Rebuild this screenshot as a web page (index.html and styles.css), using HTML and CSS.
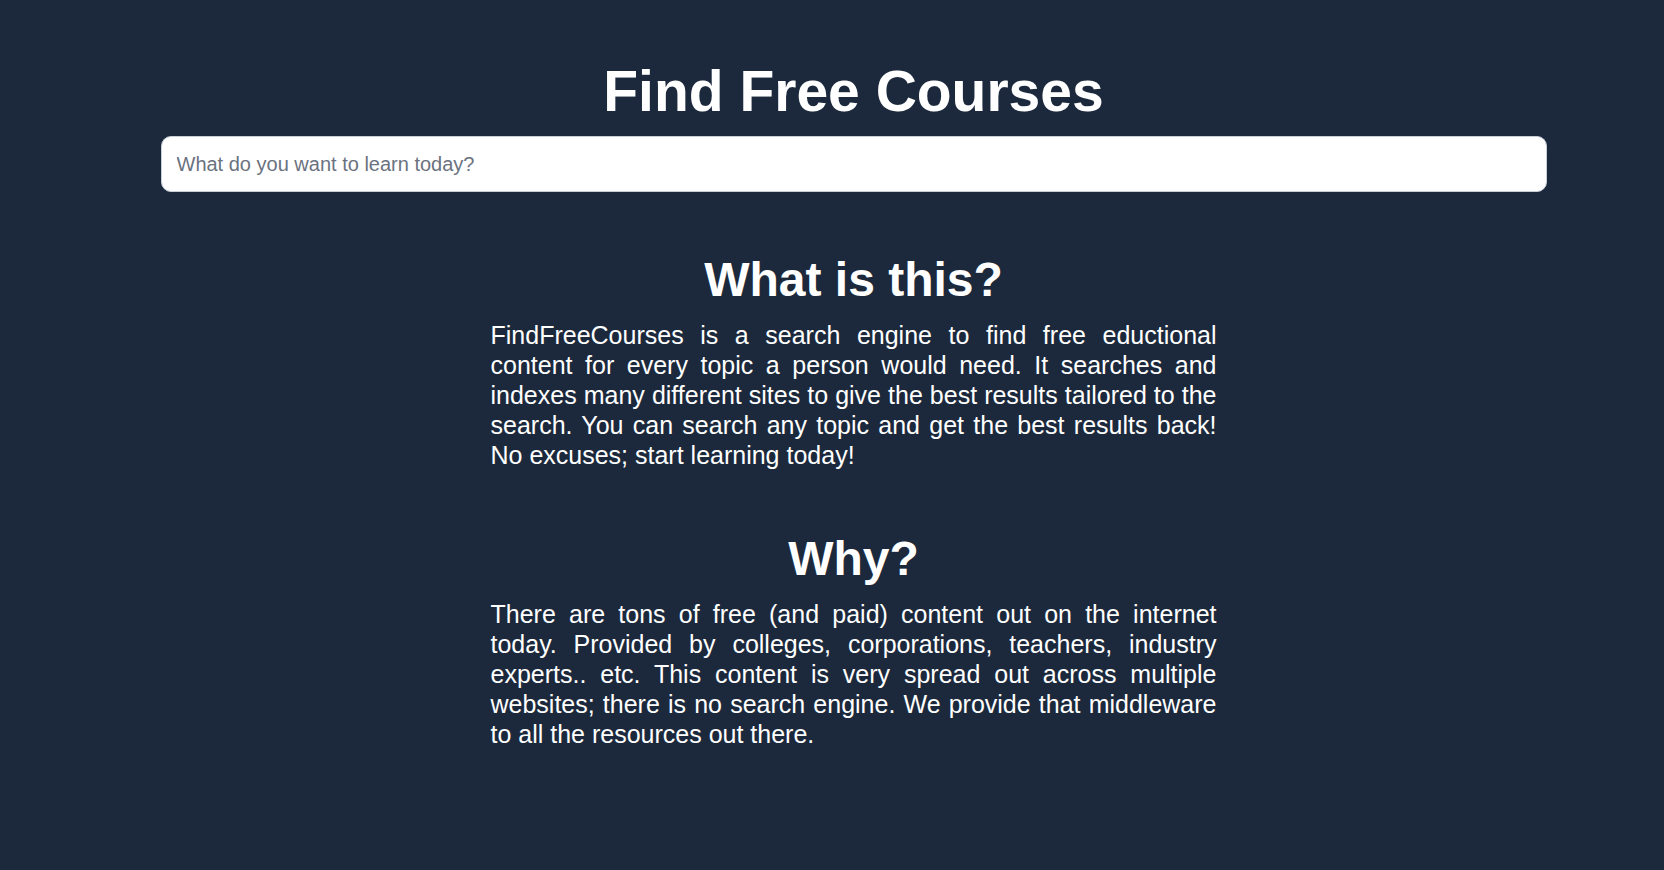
FILE: index.html
```html
<!DOCTYPE html>
<html lang="en">
<head>
<meta charset="utf-8">
<title>Find Free Courses</title>
<link rel="stylesheet" href="styles.css">
</head>
<body>
<main class="page">
  <h1 class="title">Find Free Courses</h1>
  <input class="search" type="text" placeholder="What do you want to learn today?">
  <section class="info first">
    <h2 class="info-title">What is this?</h2>
    <p class="info-text">FindFreeCourses is a search engine to find free eductional content for every topic a person would need. It searches and indexes many different sites to give the best results tailored to the search. You can search any topic and get the best results back! No excuses; start learning today!</p>
  </section>
  <section class="info">
    <h2 class="info-title">Why?</h2>
    <p class="info-text">There are tons of free (and paid) content out on the internet today. Provided by colleges, corporations, teachers, industry experts.. etc. This content is very spread out across multiple websites; there is no search engine. We provide that middleware to all the resources out there.</p>
  </section>
</main>
</body>
</html>
```
FILE: styles.css
```css
html, body {
  margin: 0;
  padding: 0;
  background: #1c293c;
  min-height: 100%;
}

body {
  font-family: "Liberation Sans", Arial, sans-serif;
  color: #ffffff;
}

.page {
  display: flex;
  flex-direction: column;
  align-items: center;
  padding: 58px 0 40px 43px;
}

.title {
  margin: 0;
  font-size: 57px;
  font-weight: 700;
  line-height: normal;
  text-align: center;
}

.search {
  box-sizing: border-box;
  margin-top: 12px;
  width: 1386px;
  height: 56px;
  padding: 0 15px;
  border: 1px solid #c8cfd9;
  border-radius: 10px;
  background: #ffffff;
  font-family: "Liberation Sans", Arial, sans-serif;
  font-size: 20px;
  color: #1f2937;
  outline: none;
}

.search::placeholder {
  color: #6b7280;
}

.info {
  display: flex;
  flex-direction: column;
  align-items: center;
  width: 726px;
  margin-top: 61px;
}

.info.first {
  margin-top: 60px;
}

.info-title {
  margin: 0;
  font-size: 48px;
  font-weight: 700;
  line-height: normal;
  text-align: center;
}

.info-text {
  margin: 13px 0 0;
  width: 100%;
  font-size: 25px;
  line-height: 30px;
  text-align: justify;
}
```
